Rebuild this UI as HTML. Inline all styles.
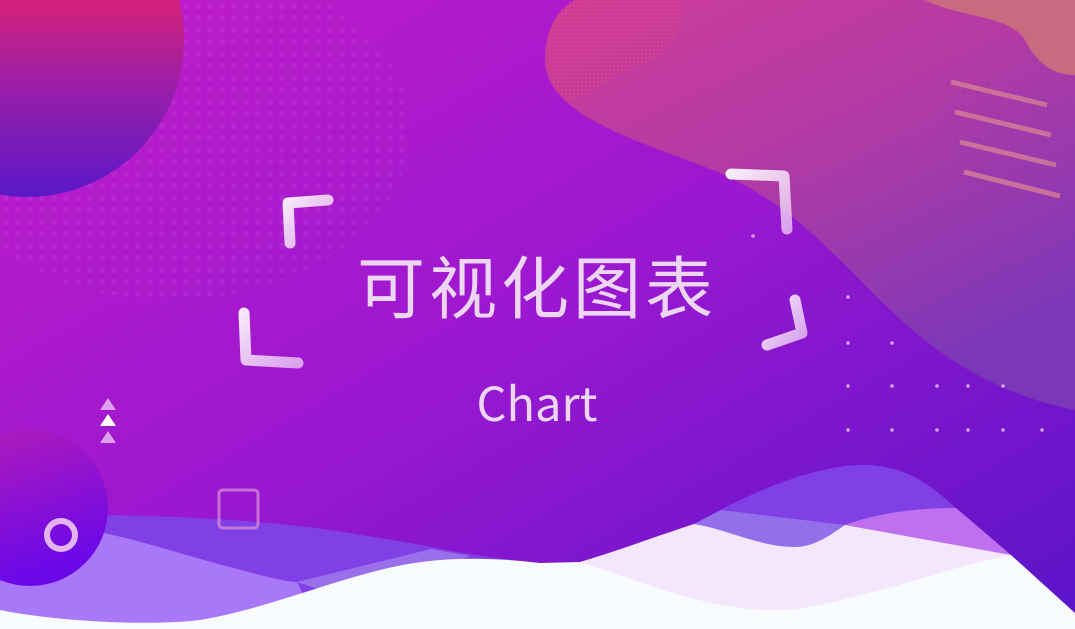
<!DOCTYPE html>
<html><head><meta charset="utf-8"><style>
html,body{margin:0;padding:0;width:1075px;height:629px;overflow:hidden;background:#fff}
svg{display:block}
</style></head><body>
<svg width="1075" height="629" viewBox="0 0 1075 629" xmlns="http://www.w3.org/2000/svg">
<defs>
<linearGradient id="bg" x1="0" y1="0" x2="1" y2="1">
<stop offset="0" stop-color="#c21cc8"/><stop offset="0.5" stop-color="#9a18d0"/><stop offset="1" stop-color="#5a14c8"/>
</linearGradient>
<linearGradient id="c1" x1="0" y1="0" x2="0" y2="1">
<stop offset="0" stop-color="#f25a6c"/><stop offset="0.3" stop-color="#e4226e"/><stop offset="0.65" stop-color="#9a1ea8"/><stop offset="1" stop-color="#5a18c8"/>
</linearGradient>
<linearGradient id="blob" x1="0" y1="0" x2="0.6" y2="1">
<stop offset="0" stop-color="#d03c9a"/><stop offset="0.5" stop-color="#b03aa6"/><stop offset="1" stop-color="#7a38b8"/>
</linearGradient>
<linearGradient id="c2" x1="0" y1="0" x2="0.3" y2="1">
<stop offset="0" stop-color="#b41cb8"/><stop offset="1" stop-color="#6a08e8"/>
</linearGradient>
<linearGradient id="br" x1="0" y1="0" x2="1" y2="1">
<stop offset="0" stop-color="#fff" stop-opacity="0.9"/><stop offset="1" stop-color="#f0d0f8" stop-opacity="0.75"/>
</linearGradient>
<pattern id="dots" width="12" height="12" patternUnits="userSpaceOnUse">
<circle cx="6" cy="6" r="3" fill="#e070e0" opacity="0.35"/>
</pattern>
<pattern id="dots2" width="8" height="8" patternUnits="userSpaceOnUse">
<circle cx="4" cy="4" r="1.6" fill="#8a3ab8" opacity="0.8"/>
</pattern>
<pattern id="dots3" width="4" height="4" patternUnits="userSpaceOnUse">
<circle cx="2" cy="2" r="1.2" fill="#f04a70"/>
</pattern>
</defs>
<rect width="1075" height="629" fill="url(#bg)"/>
<ellipse cx="170" cy="130" rx="240" ry="170" fill="url(#dots)" opacity="0.4"/>
<circle cx="27" cy="40" r="157" fill="url(#c1)"/>
<path d="M575,0 L1075,0 L1075,410 C1000,395 940,360 880,300 C820,240 780,195 700,165 C620,135 545,110 545,60 C545,25 560,10 575,0Z" fill="url(#blob)"/>
<path d="M570,0 L680,0 C685,30 670,55 640,65 C610,75 590,100 570,100 C550,95 545,60 548,40 C552,20 560,8 570,0Z" fill="url(#dots3)" opacity="0.45"/>
<circle cx="1010" cy="110" r="70" fill="url(#dots2)" opacity="0.6"/>
<path d="M925,0 L1075,0 L1075,75 C1050,75 1035,60 1025,40 C1010,15 960,18 925,0Z" fill="#c86a80"/>
<g stroke="#d27a98" stroke-width="5" opacity="0.85">
<line x1="951" y1="82" x2="1047" y2="105"/><line x1="955" y1="112" x2="1051" y2="135"/>
<line x1="960" y1="142" x2="1056" y2="165"/><line x1="964" y1="172" x2="1060" y2="196"/>
</g>
<g fill="#e8c8f4" opacity="0.8">
<circle cx="753" cy="236" r="1.8"/>
<circle cx="848" cy="297" r="1.8"/><circle cx="848" cy="343" r="1.8"/><circle cx="892" cy="343" r="1.8"/>
<circle cx="848" cy="386" r="1.8"/><circle cx="892" cy="386" r="1.8"/><circle cx="937" cy="386" r="1.8"/><circle cx="968" cy="386" r="1.8"/><circle cx="1003" cy="386" r="1.8"/>
<circle cx="848" cy="430" r="1.8"/><circle cx="892" cy="430" r="1.8"/><circle cx="937" cy="430" r="1.8"/><circle cx="968" cy="430" r="1.8"/><circle cx="1003" cy="430" r="1.8"/><circle cx="1042" cy="430" r="1.8"/>
</g>
<path d="M0,515 C120,513 250,518 330,530 C380,538 410,543 431,547 C470,555 510,560 540,563 L540,629 L0,629Z" fill="#8040e6"/>
<path d="M297,582 L431,549 L470,556 L350,600Z" fill="#9a70ea"/>
<path d="M0,533 L103,533 C140,540 200,560 241,570 C270,578 290,582 297,582 L320,629 L0,629Z" fill="#a878f8"/>
<path d="M0,610 C60,622 150,626 200,620 C260,610 320,585 380,570 C430,557 480,556 540,563 L580,562 L1011,555 L1075,613 L1075,629 L0,629Z" fill="#f8fbfd"/>
<path d="M694,524 C720,510 800,465 863,465 C910,465 935,490 956,508 L1011,555 L694,560Z" fill="#8040e6"/>
<path d="M694,524 L721,510 L845,525 C830,535 815,547 794,547 C760,547 730,530 694,524Z" fill="#9370ea"/>
<path d="M845,525 C880,512 920,508 956,508 L1011,555 Z" fill="#c070ee"/>
<path d="M580,562 C620,550 660,535 694,524 C730,530 760,547 794,547 C815,547 830,535 845,525 L1011,555 C960,565 920,580 880,590 C840,600 810,610 776,610 C700,610 640,580 580,562Z" fill="#f4e6fb"/>
<circle cx="30" cy="508" r="78" fill="url(#c2)"/>
<circle cx="61" cy="535" r="14" fill="none" stroke="#e4b4f0" stroke-width="6"/>
<rect x="219" y="490" width="39" height="38" rx="4" fill="none" stroke="#d486d4" stroke-width="3" opacity="0.8"/>
<polygon points="108,398 116,410 100,410" fill="#e0a0f0"/>
<polygon points="108,414 116,426 100,426" fill="#ffffff"/>
<polygon points="108,431 116,443 100,443" fill="#e0a0f0"/>
<g fill="none" stroke="url(#br)" stroke-width="11" stroke-linecap="round" stroke-linejoin="round">
<path d="M290,243 L288,203 L328,200"/>
<path d="M731,174 L784,176 L787,229"/>
<path d="M244,313 L246,360 L298,363"/>
<path d="M795,300 L802,333 L767,345"/>
</g>
<text x="537" y="313" text-anchor="middle" font-family="'Noto Sans CJK SC',sans-serif" font-size="68" letter-spacing="4" fill="#ecd6f4">可视化图表</text>
<text x="537" y="421" text-anchor="middle" font-family="'Noto Sans CJK SC',sans-serif" font-size="47" fill="#ecd6f4">Chart</text>
</svg>
</body></html>
